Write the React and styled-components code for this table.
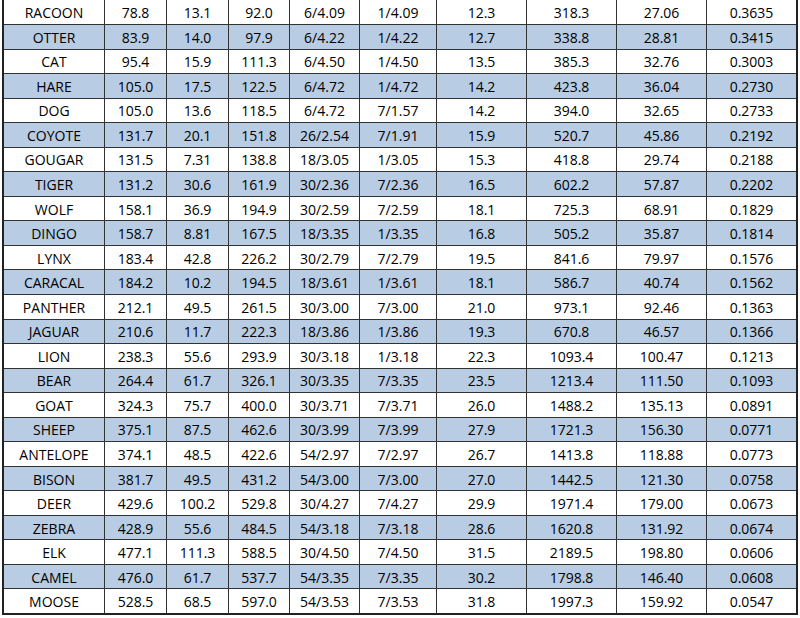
import React from 'react';
import styled, { createGlobalStyle } from 'styled-components';

const GlobalStyle = createGlobalStyle`
  html, body {
    margin: 0;
    padding: 0;
    background: #ffffff;
    overflow: hidden;
  }
  body {
    font-family: 'Open Sans', 'Noto Sans', 'Liberation Sans', sans-serif;
  }
`;

const rows = [
  ['RACOON', '78.8', '13.1', '92.0', '6/4.09', '1/4.09', '12.3', '318.3', '27.06', '0.3635'],
  ['OTTER', '83.9', '14.0', '97.9', '6/4.22', '1/4.22', '12.7', '338.8', '28.81', '0.3415'],
  ['CAT', '95.4', '15.9', '111.3', '6/4.50', '1/4.50', '13.5', '385.3', '32.76', '0.3003'],
  ['HARE', '105.0', '17.5', '122.5', '6/4.72', '1/4.72', '14.2', '423.8', '36.04', '0.2730'],
  ['DOG', '105.0', '13.6', '118.5', '6/4.72', '7/1.57', '14.2', '394.0', '32.65', '0.2733'],
  ['COYOTE', '131.7', '20.1', '151.8', '26/2.54', '7/1.91', '15.9', '520.7', '45.86', '0.2192'],
  ['GOUGAR', '131.5', '7.31', '138.8', '18/3.05', '1/3.05', '15.3', '418.8', '29.74', '0.2188'],
  ['TIGER', '131.2', '30.6', '161.9', '30/2.36', '7/2.36', '16.5', '602.2', '57.87', '0.2202'],
  ['WOLF', '158.1', '36.9', '194.9', '30/2.59', '7/2.59', '18.1', '725.3', '68.91', '0.1829'],
  ['DINGO', '158.7', '8.81', '167.5', '18/3.35', '1/3.35', '16.8', '505.2', '35.87', '0.1814'],
  ['LYNX', '183.4', '42.8', '226.2', '30/2.79', '7/2.79', '19.5', '841.6', '79.97', '0.1576'],
  ['CARACAL', '184.2', '10.2', '194.5', '18/3.61', '1/3.61', '18.1', '586.7', '40.74', '0.1562'],
  ['PANTHER', '212.1', '49.5', '261.5', '30/3.00', '7/3.00', '21.0', '973.1', '92.46', '0.1363'],
  ['JAGUAR', '210.6', '11.7', '222.3', '18/3.86', '1/3.86', '19.3', '670.8', '46.57', '0.1366'],
  ['LION', '238.3', '55.6', '293.9', '30/3.18', '1/3.18', '22.3', '1093.4', '100.47', '0.1213'],
  ['BEAR', '264.4', '61.7', '326.1', '30/3.35', '7/3.35', '23.5', '1213.4', '111.50', '0.1093'],
  ['GOAT', '324.3', '75.7', '400.0', '30/3.71', '7/3.71', '26.0', '1488.2', '135.13', '0.0891'],
  ['SHEEP', '375.1', '87.5', '462.6', '30/3.99', '7/3.99', '27.9', '1721.3', '156.30', '0.0771'],
  ['ANTELOPE', '374.1', '48.5', '422.6', '54/2.97', '7/2.97', '26.7', '1413.8', '118.88', '0.0773'],
  ['BISON', '381.7', '49.5', '431.2', '54/3.00', '7/3.00', '27.0', '1442.5', '121.30', '0.0758'],
  ['DEER', '429.6', '100.2', '529.8', '30/4.27', '7/4.27', '29.9', '1971.4', '179.00', '0.0673'],
  ['ZEBRA', '428.9', '55.6', '484.5', '54/3.18', '7/3.18', '28.6', '1620.8', '131.92', '0.0674'],
  ['ELK', '477.1', '111.3', '588.5', '30/4.50', '7/4.50', '31.5', '2189.5', '198.80', '0.0606'],
  ['CAMEL', '476.0', '61.7', '537.7', '54/3.35', '7/3.35', '30.2', '1798.8', '146.40', '0.0608'],
  ['MOOSE', '528.5', '68.5', '597.0', '54/3.53', '7/3.53', '31.8', '1997.3', '159.92', '0.0547'],
];

export default function App() {
  return (
    <>
      <GlobalStyle />
      <Sheet>
        {rows.map((row, r) =>
          row.map((value, c) => (
            <Cell key={`${r}-${c}`} $shaded={r % 2 === 1} $first={r === 0}>
              {value}
            </Cell>
          ))
        )}
      </Sheet>
    </>
  );
}

const Sheet = styled.div`
  margin: -2px 0 0 2px;
  width: 796px;
  height: 617px;
  box-sizing: border-box;
  display: grid;
  grid-template-columns: 100px 61px 61px 60px 69px 76px 89px 89px 89px 89px;
  grid-template-rows: 25.5fr repeat(24, 24fr);
  gap: 1px;
  background: #333333;
  border-top: 1px solid #222222;
  border-left: 2px solid #222222;
  border-right: 2px solid #222222;
  border-bottom: 2px solid #222222;
`;

const Cell = styled.div`
  display: flex;
  align-items: center;
  justify-content: center;
  padding-top: ${(p) => (p.$first ? '3px' : '2px')};
  box-sizing: border-box;
  background: ${(p) => (p.$shaded ? '#b8cce4' : '#ffffff')};
  color: #000000;
  font-size: 14px;
  line-height: 1;
  white-space: nowrap;
`;
